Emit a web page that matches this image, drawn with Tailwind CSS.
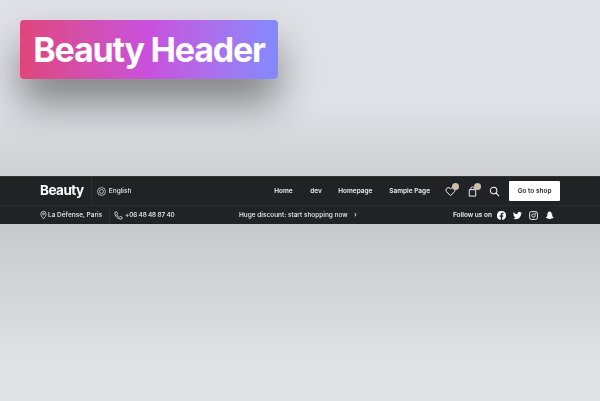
<!DOCTYPE html>
<html lang="en">
<head>
<meta charset="UTF-8">
<meta name="viewport" content="width=device-width, initial-scale=1.0">
<script src="https://cdn.jsdelivr.net/npm/@tailwindcss/browser@4"></script>
<title>Beauty Header</title>
</head>
<body class="w-[600px] h-[401px] overflow-hidden font-['Inter',sans-serif]">
  <div class="h-[176px] bg-gradient-to-b from-[#dfe1e6] from-60% to-[#cfd0d3] px-5 pt-5">
    <div class="w-[258px] h-[59px] rounded-[4px] bg-gradient-to-r from-[#e0457b] via-[#c850dc] via-50% to-[#8189fd] flex items-center justify-center shadow-[0_25px_40px_rgba(0,0,0,0.42)]">
      <h1 class="text-[34px] font-bold text-white tracking-[-1.2px] leading-none">Beauty Header</h1>
    </div>
  </div>

  <header class="h-[48px] bg-[#202226] text-white whitespace-nowrap border-t border-[#33352f] will-change-transform">
    <div class="h-[29px] pl-10 pr-10 flex items-center border-b border-[#2c2e33]">
      <span class="text-[13.5px] font-bold tracking-[-0.5px] w-[51px] pb-[2px]">Beauty</span>
      <div class="h-full w-[184px] border-l border-[#2c2e33] pl-[5px] flex items-center gap-[3px] text-[6.5px] font-medium text-[#e6e7e9]">
        <svg class="w-[9px] h-[9px]" viewBox="0 0 10 10" fill="none" stroke="currentColor" stroke-width="0.8"><circle cx="5" cy="5" r="4.400"/><circle cx="5" cy="5" r="2.200"/></svg>
        <span class="pt-[2px]">English</span>
      </div>
      <nav class="flex gap-[17px] pt-[2px] text-[6.5px] font-semibold text-[#eceded]">
        <a class="w-[19px]">Home</a><a class="w-[11px]">dev</a><a class="w-[34px]">Homepage</a><a class="w-[41px]">Sample Page</a>
      </nav>
      <div class="ml-[15px] flex items-center gap-[11px]">
        <div class="relative">
          <svg class="w-[11px] h-[11px] block" viewBox="0 0 12 12" fill="none" stroke="white" stroke-width="1"><path d="M6 10.600 1.500 6A2.700 2.700 0 0 1 6 3a2.700 2.700 0 0 1 4.500 3z"/></svg>
          <span class="absolute -top-[3px] left-[7px] w-[7px] h-[7px] rounded-full bg-[#c9bfa8]"></span>
        </div>
        <div class="relative">
          <svg class="w-[11px] h-[11px] block" viewBox="0 0 12 12" fill="none" stroke="white" stroke-width="1"><path d="M2.500 4h7v7h-7zM4.200 4V2.800a1.800 1.800 0 0 1 3.600 0V4"/></svg>
          <span class="absolute -top-[3px] left-[7px] w-[7px] h-[7px] rounded-full bg-[#c9bfa8]"></span>
        </div>
        <svg class="w-[11px] h-[11px] block" viewBox="0 0 12 12" fill="none" stroke="white" stroke-width="1.100"><circle cx="5" cy="5" r="3.600"/><path d="M7.700 7.700 11 11"/></svg>
      </div>
      <button class="ml-[9px] w-[51px] h-[20px] pt-[2px] bg-white text-[#2a2c30] text-[6.5px] font-semibold rounded-[1px]">Go to shop</button>
    </div>
    <div class="h-[18px] pl-10 pr-10 flex items-center text-[6.5px] font-medium text-[#eceded]">
      <svg class="w-[7px] h-[10px]" viewBox="0 0 8 10" fill="none" stroke="white" stroke-width="0.8"><path d="M4 9.400C2.500 7.400 1 5.800 1 3.800a3 3 0 0 1 6 0c0 2-1.500 3.600-3 5.600z"/><circle cx="4" cy="3.800" r="1"/></svg>
      <span class="ml-[1px] w-[61px] pt-[2px]">La Défense, Paris</span>
      <div class="h-full w-[130px] border-l border-[#2c2e33] pl-[4px] flex items-center gap-[2px]">
        <svg class="w-[9px] h-[9px]" viewBox="0 0 10 10" fill="none" stroke="white" stroke-width="0.8"><path d="M1 1.500 2.800.8 4 3 3 4a5 5 0 0 0 3 3l1-1 2.200 1.200-.7 1.800C4.500 9.500.5 5.500 1 1.500z"/></svg>
        <span class="pt-[2px] tracking-[-0.2px]">+06 48 48 87 40</span>
      </div>
      <span class="w-[115px] pt-[2px]">Huge discount: start shopping now</span>
      <span class="text-[7px]">›</span>
      <span class="ml-auto font-semibold pt-[2px]">Follow us on</span>
      <div class="ml-[5px] mr-[6px] flex items-center gap-[7px]">
        <svg class="w-[9px] h-[9px]" viewBox="0 0 16 16" fill="white"><path d="M16 8a8 8 0 1 0-9.250 7.900V10.300H4.700V8h2.050V6.240c0-2 1.190-3.110 3.020-3.110.87 0 1.790.16 1.790.16v1.970h-1c-1 0-1.310.62-1.310 1.250V8h2.220l-.35 2.300H9.250v5.600A8 8 0 0 0 16 8z"/></svg>
        <svg class="w-[9px] h-[9px]" viewBox="0 0 16 16" fill="white"><path d="M5 14.500c6 0 9.300-5 9.300-9.300v-.4A6.700 6.700 0 0 0 16 3.100a6.500 6.500 0 0 1-1.900.5 3.300 3.300 0 0 0 1.400-1.800 6.500 6.500 0 0 1-2 .8 3.300 3.300 0 0 0-5.600 3A9.300 9.300 0 0 1 1.100 2.200a3.300 3.300 0 0 0 1 4.400A3.300 3.300 0 0 1 .6 6.200a3.300 3.300 0 0 0 2.600 3.200 3.300 3.300 0 0 1-1.500.1 3.300 3.300 0 0 0 3 2.300A6.600 6.600 0 0 1 0 13.200a9.300 9.300 0 0 0 5 1.300z"/></svg>
        <svg class="w-[9px] h-[9px]" viewBox="0 0 16 16" fill="none" stroke="white" stroke-width="1.600"><rect x="1" y="1" width="14" height="14" rx="3.500"/><circle cx="8" cy="8" r="3"/><circle cx="12" cy="4" r=".5" fill="white"/></svg>
        <svg class="w-[9px] h-[9px]" viewBox="0 0 16 16" fill="white"><path d="M8 1c2.500 0 4 1.900 4 4.200v1.500l1.400-.3c.5 0 .6.700.1.900l-1.300.6c.4 1.500 1.500 2.600 3 3.200.4.200.3.700-.1.800l-1.500.4-.4 1c-1.300-.2-2.400-.1-3.200.6-1 .8-2.200.8-3.200 0-.8-.7-1.900-.8-3.200-.6l-.4-1-1.500-.4c-.4-.1-.5-.6-.1-.8 1.500-.6 2.600-1.700 3-3.200l-1.300-.6c-.5-.2-.4-.9.100-.9l1.400.3V5.200C4 2.900 5.500 1 8 1z"/></svg>
      </div>
    </div>
  </header>

  <div class="h-[177px] bg-gradient-to-b from-[#c8c9cc] to-[#e0e2e6] to-80%"></div>
</body>
</html>
